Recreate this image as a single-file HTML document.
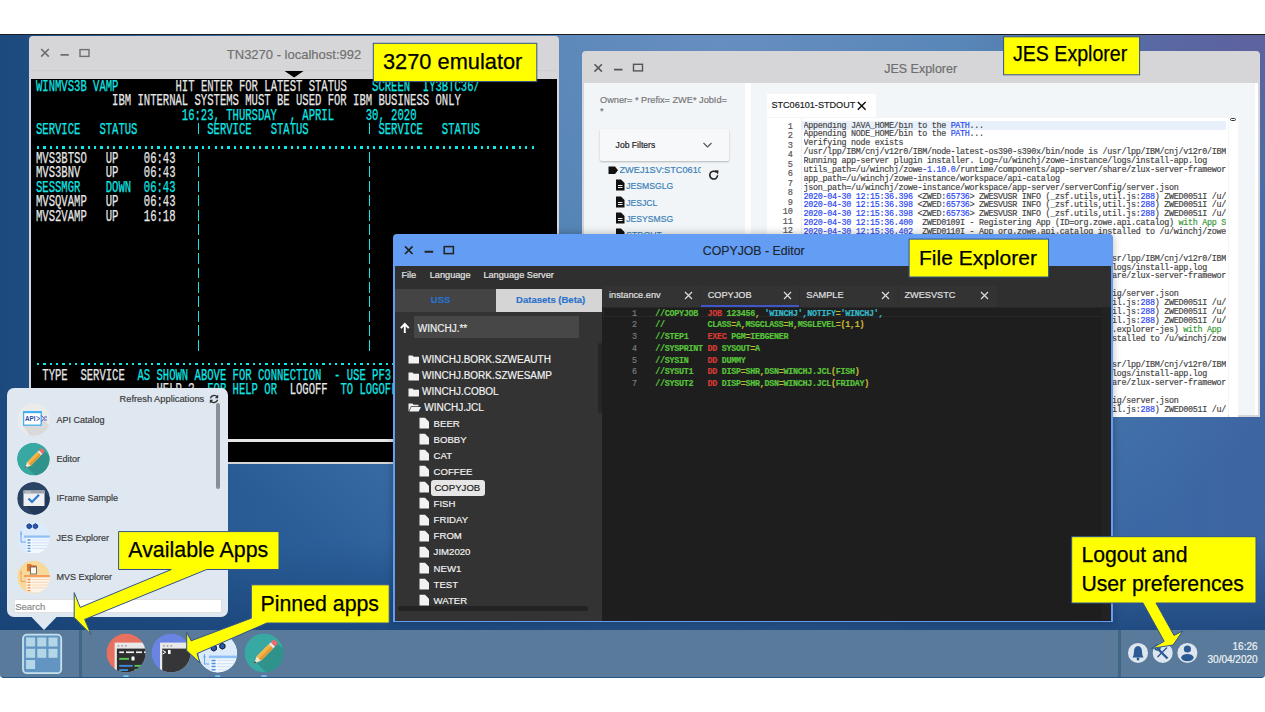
<!DOCTYPE html>
<html><head><meta charset="utf-8">
<style>
*{margin:0;padding:0;box-sizing:border-box}
html,body{width:1265px;height:712px;overflow:hidden;background:#fff;font-family:"Liberation Sans",sans-serif}
.a{position:absolute;-webkit-text-stroke:0.18px currentColor}
#desk{position:absolute;left:0;top:34px;width:1265px;height:596px;border-top:1.5px solid #1e1e22;
background:radial-gradient(ellipse 300px 160px at 1265px 0px,rgba(94,98,158,1) 0%,rgba(94,98,158,.6) 50%,rgba(94,98,158,0) 100%),radial-gradient(ellipse 700px 620px at 720px 0px,rgba(104,142,192,1) 0%,rgba(92,140,186,.8) 40%,rgba(92,140,186,0) 100%),linear-gradient(0deg,rgba(24,66,118,.75) 0px,rgba(24,66,118,0) 90px),linear-gradient(90deg,#1d4a7e 0px,#1e4b80 40px,#295c95 240px,#3064a0 500px,#3a6aa6 900px,#3b68a4 1150px,#3e64a2 1265px)}
#taskbar{position:absolute;left:0;top:630px;width:1265px;height:47.5px;background:#597a9a;border-bottom:1.5px solid #1f5585;border-radius:0 0 4px 4px}
.win{position:absolute;border-radius:4px 4px 0 0;overflow:hidden}
.x{position:absolute;width:10px;height:10px}
.term{position:absolute;left:36.3px;top:79.6px;font-family:"Liberation Mono",monospace;font-size:16.5px;line-height:14.45px;white-space:pre;transform:scaleX(0.6404);transform-origin:0 0;color:#ededed;-webkit-text-stroke:0.25px currentColor}
.cl{-webkit-text-stroke:0.25px #000}
.yl{position:absolute;background:#ff0;border:1px solid #2f4f8f;font-family:"Liberation Sans",sans-serif;color:#000;white-space:nowrap}
</style></head><body>
<div id="desk"></div>
<div id="taskbar"></div>

<!-- TN3270 window -->
<div class="win" id="tn" style="left:29px;top:36px;width:530px;height:428px;background:#d6d6d8">
  <svg class="a" style="left:0;top:0" width="530" height="42">
    <path d="M12.2 13 L19.8 20.6 M19.8 13 L12.2 20.6" stroke="#6e6e6e" stroke-width="1.6"/>
    <path d="M31.5 18.8 H39.8" stroke="#6e6e6e" stroke-width="1.8"/>
    <rect x="51" y="13.6" width="9" height="6.8" fill="none" stroke="#6e6e6e" stroke-width="1.4"/>
    <line x1="2" y1="34.6" x2="528" y2="34.6" stroke="#cfcfd1" stroke-width="1"/>
    <path d="M255.6 35 L274.6 35 L265.1 41.5 Z" fill="#000"/>
  </svg>
  <div class="a" style="left:197.8px;top:10.8px;font-size:13px;line-height:16px;color:#707070">TN3270 - localhost:992</div>
  <div class="a" style="left:2px;top:42.5px;width:526px;height:383.5px;background:#000"></div>
  <div class="a" style="left:2px;top:403px;width:526px;height:2.6px;background:#e6e6e6"></div>
</div>
<div class="term"><span style="color:#10e8e8">WINMVS3B VAMP</span>         <span style="color:#e8e8e8">HIT ENTER FOR LATEST STATUS</span>    <span style="color:#10e8e8">SCREEN  IY3BTC36/</span>
            <span style="color:#e8e8e8">IBM INTERNAL SYSTEMS MUST BE USED FOR IBM BUSINESS ONLY</span>
                       <span style="color:#10e8e8">16:23, THURSDAY  , APRIL     30, 2020</span>
<span style="color:#10e8e8">SERVICE   STATUS</span>           <span style="color:#10e8e8">SERVICE   STATUS</span>           <span style="color:#10e8e8">SERVICE   STATUS</span>
                                                                               
<span style="color:#e8e8e8">MVS3BTSO</span>   <span style="color:#e8e8e8">UP</span>    <span style="color:#e8e8e8">06:43</span>                               
<span style="color:#e8e8e8">MVS3BNV</span>    <span style="color:#e8e8e8">UP</span>    <span style="color:#e8e8e8">06:43</span>                               
<span style="color:#10e8e8">SESSMGR</span>    <span style="color:#10e8e8">DOWN</span>  <span style="color:#10e8e8">06:43</span>                               
<span style="color:#e8e8e8">MVSQVAMP</span>   <span style="color:#e8e8e8">UP</span>    <span style="color:#e8e8e8">06:43</span>                               
<span style="color:#e8e8e8">MVS2VAMP</span>   <span style="color:#e8e8e8">UP</span>    <span style="color:#e8e8e8">16:18</span>                               
                                                     
                                                     
                                                     
                                                     
                                                     
                                                     
                                                     
                                                     
                                                     
                                                                               
 <span style="color:#e8e8e8">TYPE</span>  <span style="color:#e8e8e8">SERVICE</span>  <span style="color:#10e8e8">AS SHOWN ABOVE FOR CONNECTION  - USE PF3 TO EXIT</span>
                   <span style="color:#e8e8e8">HELP ?</span>  <span style="color:#10e8e8">FOR HELP OR</span>  <span style="color:#e8e8e8">LOGOFF</span>  <span style="color:#10e8e8">TO LOGOFF</span>


</div>
<div class="a" style="left:37.2px;top:146.3px;width:500px;height:2.3px;background:repeating-linear-gradient(90deg,#10e8e8 0 2.3px,transparent 2.3px 6.34px)"></div>
<div class="a" style="left:37.2px;top:362.5px;width:500px;height:2.3px;background:repeating-linear-gradient(90deg,#10e8e8 0 2.3px,transparent 2.3px 6.34px)"></div>
<div class="a" style="left:197.9px;top:122.8px;width:1.4px;height:10.8px;background:#10e8e8"></div>
<div class="a" style="left:197.9px;top:151.8px;width:1.4px;height:202.3px;background:repeating-linear-gradient(180deg,#10e8e8 0 10.8px,transparent 10.8px 14.45px)"></div>
<div class="a" style="left:369.1px;top:122.8px;width:1.4px;height:10.8px;background:#10e8e8"></div>
<div class="a" style="left:369.1px;top:151.8px;width:1.4px;height:202.3px;background:repeating-linear-gradient(180deg,#10e8e8 0 10.8px,transparent 10.8px 14.45px)"></div>

<!-- JES window -->
<div class="win" id="jes" style="left:582px;top:51px;width:678px;height:365.5px;background:#d6d6d8">
  <svg class="a" style="left:0;top:0" width="80" height="32">
    <path d="M12.5 13.2 L19.9 20.6 M19.9 13.2 L12.5 20.6" stroke="#555" stroke-width="1.5"/>
    <path d="M32 18.6 H40.5" stroke="#555" stroke-width="1.8"/>
    <rect x="51.5" y="13.3" width="9" height="6.6" fill="none" stroke="#555" stroke-width="1.4"/>
  </svg>
  <div class="a" style="left:302.2px;top:10.2px;font-size:12.5px;line-height:16px;color:#6e6e6e">JES Explorer</div>
  <div class="a" style="left:2px;top:31.5px;width:160.5px;height:332px;background:#f2f5f7"></div>
  <div class="a" style="left:162.5px;top:31.5px;width:6px;height:332px;background:#fff"></div>
  <div class="a" style="left:168.5px;top:31.5px;width:504px;height:332px;background:#f3f6f8"></div>
  <div class="a" style="left:672.5px;top:31.5px;width:3.5px;height:332px;background:#fff"></div>
  <!-- left panel -->
  <div class="a" style="left:18px;top:43.5px;width:135px;font-size:9.2px;line-height:11px;color:#777">Owner= * Prefix= ZWE* JobId=<br>*</div>
  <div class="a" style="left:18px;top:78.3px;width:128.8px;height:31.5px;background:#f6f8fa;box-shadow:0 1px 2px rgba(0,0,0,.25);border-radius:2px"></div>
  <div class="a" style="left:33.6px;top:87.6px;font-size:8.6px;line-height:12px;color:#222">Job Filters</div>
  <svg class="a" style="left:120px;top:89px" width="12" height="10"><path d="M1.5 3 L5.5 7 L9.5 3" fill="none" stroke="#555" stroke-width="1.2"/></svg>
  <svg class="a" style="left:26px;top:113.5px" width="11" height="11"><path d="M0.5 1.5 H7 L10 5.2 L7 8.9 H0.5 Z" fill="#111"/></svg>
  <div class="a" style="left:37.5px;top:112.5px;width:81px;overflow:hidden;font-size:9.2px;line-height:13px;color:#3a80b8;white-space:nowrap">ZWEJ1SV:STC06101</div>
  <svg class="a" style="left:126px;top:118px" width="12" height="12"><path d="M9.6 6.3 A3.9 3.9 0 1 1 8.3 3.2" fill="none" stroke="#222" stroke-width="1.6"/><path d="M6.5 1.2 L10.6 1.6 L10 5.5 Z" fill="#222"/></svg>
  <div class="a" style="left:33px;top:130px;font-size:10px;line-height:13px;color:#3a80b8">
    <div style="position:absolute;left:0;top:0">&nbsp;</div>
  </div>
  <svg class="a" style="left:33px;top:128.3px" width="10" height="12"><path d="M1 0.5 H6 L9.5 4 V11.5 H1 Z" fill="#111"/><path d="M3 6.5 H7.5 M3 8.5 H7.5" stroke="#f2f5f7" stroke-width="1"/></svg>
  <div class="a" style="left:44.3px;top:129.4px;font-size:8.6px;line-height:13px;color:#3a80b8">JESMSGLG</div>
  <svg class="a" style="left:33px;top:144.8px" width="10" height="12"><path d="M1 0.5 H6 L9.5 4 V11.5 H1 Z" fill="#111"/><path d="M3 6.5 H7.5 M3 8.5 H7.5" stroke="#f2f5f7" stroke-width="1"/></svg>
  <div class="a" style="left:44.3px;top:145.9px;font-size:8.6px;line-height:13px;color:#3a80b8">JESJCL</div>
  <svg class="a" style="left:33px;top:160.9px" width="10" height="12"><path d="M1 0.5 H6 L9.5 4 V11.5 H1 Z" fill="#111"/><path d="M3 6.5 H7.5 M3 8.5 H7.5" stroke="#f2f5f7" stroke-width="1"/></svg>
  <div class="a" style="left:44.3px;top:162.0px;font-size:8.6px;line-height:13px;color:#3a80b8">JESYSMSG</div>
  <svg class="a" style="left:33px;top:177.2px" width="10" height="12"><path d="M1 0.5 H6 L9.5 4 V11.5 H1 Z" fill="#111"/><path d="M3 6.5 H7.5 M3 8.5 H7.5" stroke="#f2f5f7" stroke-width="1"/></svg>
  <div class="a" style="left:44.3px;top:178.3px;font-size:8.6px;line-height:13px;color:#3a80b8">STDOUT</div>
  <!-- right panel -->
  <div class="a" style="left:185px;top:42.7px;width:108.5px;height:23.5px;background:#fff"></div>
  <div class="a" style="left:189.4px;top:48px;font-size:9.1px;line-height:12px;color:#1a1a1a">STC06101-STDOUT</div>
  <svg class="a" style="left:274px;top:49px" width="12" height="12"><path d="M1.8 2 L9.6 9.8 M9.6 2 L1.8 9.8" stroke="#111" stroke-width="1.5"/></svg>
  <div class="a" style="left:185px;top:66.5px;width:460.5px;height:300px;background:#fff"></div>
  <div class="a" style="left:218.6px;top:66.5px;width:1.2px;height:300px;background:#f0f0f0"></div>
  <div class="a" style="left:220px;top:70.1px;width:424.2px;height:8.6px;background:#e8f0fb"></div>
  <div class="a" style="left:646.9px;top:66.9px;width:9.3px;height:300px;background:#fff"></div>
  <div class="a" style="left:648px;top:66.9px;width:6.2px;height:3.6px;border:1.3px solid #333;border-radius:2px;background:#fff"></div>
  <div class="a" style="left:186px;top:71.9px;width:25px;text-align:right;font-family:'Liberation Mono',monospace;font-size:8.6px;line-height:9.5px;color:#555;white-space:pre">1
2
3
4
5
6
7
8
9
10
11
12
13</div>
  <div class="a" style="left:221.5px;top:70.5px;width:422.4px;overflow:hidden;height:296px;font-family:'Liberation Mono',monospace;font-size:8.4px;letter-spacing:-0.28px;line-height:8.88px;color:#454545;white-space:pre">Appending JAVA_HOME/bin to the <span style="color:#2a48f2">PATH</span>...
Appending NODE_HOME/bin to the <span style="color:#2a48f2">PATH</span>...
Verifying node exists
/usr/lpp/IBM/cnj/v12r0/IBM/node-latest-os390-s390x/bin/node is /usr/lpp/IBM/cnj/v12r0/IBM/node
Running app-server plugin installer. Log=/u/winchj/zowe-instance/logs/install-app.log
utils_path=/u/winchj/zowe<span style="color:#2a48f2">-1.10.0</span>/runtime/components/app-server/share/zlux-server-framework
app_path=/u/winchj/zowe-instance/workspace/api-catalog
json_path=/u/winchj/zowe-instance/workspace/app-server/serverConfig/server.json
<span style="color:#2a48f2">2020-04-30 12:15:36.396</span> &lt;ZWED:<span style="color:#2a48f2">65736</span>&gt; ZWESVUSR INFO (_zsf.utils,util.js:<span style="color:#2a48f2">288</span>) ZWED0051I /u/winchj/zowe-instance
<span style="color:#2a48f2">2020-04-30 12:15:36.398</span> &lt;ZWED:<span style="color:#2a48f2">65736</span>&gt; ZWESVUSR INFO (_zsf.utils,util.js:<span style="color:#2a48f2">288</span>) ZWED0051I /u/winchj/zowe-instance
<span style="color:#2a48f2">2020-04-30 12:15:36.398</span> &lt;ZWED:<span style="color:#2a48f2">65736</span>&gt; ZWESVUSR INFO (_zsf.utils,util.js:<span style="color:#2a48f2">288</span>) ZWED0051I /u/winchj/zowe-instance
<span style="color:#2a48f2">2020-04-30 12:15:36.400</span>  ZWED0109I - Registering App (ID=org.zowe.api.catalog) <span style="color:#3a9a3a">with App Server</span>
<span style="color:#2a48f2">2020-04-30 12:15:36.402</span>  ZWED0110I - App org.zowe.api.catalog installed to /u/winchj/zowe-instance
Appending NODE_HOME/bin to the <span style="color:#2a48f2">PATH</span>...
Verifying node exists
/usr/lpp/IBM/cnj/v12r0/IBM/node-latest-os390-s390x/bin/node is /usr/lpp/IBM/cnj/v12r0/IBM/node
Running app-server plugin installer. Log=/u/winchj/zowe-instance/logs/install-app.log
utils_path=/u/winchj/zowe<span style="color:#2a48f2">-1.10.0</span>/runtime/components/app-server/share/zlux-server-framework
app_path=/u/winchj/zowe-instance/workspace/api-catalog
json_path=/u/winchj/zowe-instance/workspace/app-server/serverConfig/server.json
<span style="color:#2a48f2">2020-04-30 12:15:36.396</span> &lt;ZWED:<span style="color:#2a48f2">65736</span>&gt; ZWESVUSR INFO (_zsf.utils,util.js:<span style="color:#2a48f2">288</span>) ZWED0051I /u/winchj/zowe-instance
<span style="color:#2a48f2">2020-04-30 12:15:36.398</span> &lt;ZWED:<span style="color:#2a48f2">65736</span>&gt; ZWESVUSR INFO (_zsf.utils,util.js:<span style="color:#2a48f2">288</span>) ZWED0051I /u/winchj/zowe-instance
<span style="color:#2a48f2">2020-04-30 12:15:36.398</span> &lt;ZWED:<span style="color:#2a48f2">65736</span>&gt; ZWESVUSR INFO (_zsf.utils,util.js:<span style="color:#2a48f2">288</span>) ZWED0051I /u/winchj/zowe-instance
<span style="color:#2a48f2">2020-04-30 12:15:36.500</span>  ZWED0109I - Registering App (ID=org.zowe.explorer-jes) <span style="color:#3a9a3a">with App</span> Server
<span style="color:#2a48f2">2020-04-30 12:15:36.502</span>  ZWED0110I - App org.zowe.explorer-jes installed to /u/winchj/zowe-instance
Appending NODE_HOME/bin to the <span style="color:#2a48f2">PATH</span>...
Verifying node exists
/usr/lpp/IBM/cnj/v12r0/IBM/node-latest-os390-s390x/bin/node is /usr/lpp/IBM/cnj/v12r0/IBM/node
Running app-server plugin installer. Log=/u/winchj/zowe-instance/logs/install-app.log
utils_path=/u/winchj/zowe<span style="color:#2a48f2">-1.10.0</span>/runtime/components/app-server/share/zlux-server-framework
app_path=/u/winchj/zowe-instance/workspace/api-catalog
json_path=/u/winchj/zowe-instance/workspace/app-server/serverConfig/server.json
<span style="color:#2a48f2">2020-04-30 12:15:36.396</span> &lt;ZWED:<span style="color:#2a48f2">65736</span>&gt; ZWESVUSR INFO (_zsf.utils,util.js:<span style="color:#2a48f2">288</span>) ZWED0051I /u/winchj/zowe-instance</div>
</div>

<!-- Editor window -->
<div class="win" id="ed" style="left:393px;top:234px;width:720px;height:388px;background:#649ef4;border-radius:4px 4px 0 0;box-shadow:0 0 8px rgba(0,0,0,.28)">
  <svg class="a" style="left:0;top:0" width="80" height="32">
    <path d="M12 12.4 L19.6 20 M19.6 12.4 L12 20" stroke="#222" stroke-width="1.7"/>
    <path d="M31.6 17.8 H40.2" stroke="#222" stroke-width="1.9"/>
    <rect x="51.2" y="12.6" width="9.2" height="7" fill="none" stroke="#222" stroke-width="1.5"/>
  </svg>
  <div class="a" style="left:309.8px;top:8.8px;font-size:12.3px;line-height:16px;color:#1c2633">COPYJOB - Editor</div>
  <div class="a" style="left:2px;top:31.5px;width:716px;height:355px;background:#2f2f2f"></div>
  <div class="a" style="left:8.4px;top:35.3px;font-size:9.2px;line-height:12px;color:#e6e6e6;white-space:nowrap">File</div>
  <div class="a" style="left:36.7px;top:35.3px;font-size:9.2px;line-height:12px;color:#e6e6e6;white-space:nowrap">Language</div>
  <div class="a" style="left:90.4px;top:35.3px;font-size:9.2px;line-height:12px;color:#e6e6e6;white-space:nowrap">Language Server</div>
  <!-- left panel -->
  <div class="a" style="left:2.2px;top:54.7px;width:206.6px;height:332px;background:#333"></div>
  <div class="a" style="left:2.2px;top:54.7px;width:100.5px;height:23.5px;background:#444"></div>
  <div class="a" style="left:102.7px;top:54.7px;width:106px;height:23.5px;background:#d5d5d5"></div>
  <div class="a" style="left:-2.7px;top:58.5px;width:100.5px;text-align:center;font-size:9.5px;line-height:14px;font-weight:bold;color:#2a72cc">USS</div>
  <div class="a" style="left:104.7px;top:58.5px;width:106px;text-align:center;font-size:9.5px;line-height:14px;font-weight:bold;color:#2a72cc">Datasets (Beta)</div>
  <div class="a" style="left:21.3px;top:82px;width:164.7px;height:21.8px;background:#474747"></div>
  <svg class="a" style="left:6px;top:88px" width="12" height="12"><path d="M5.8 11 V2.5 M1.8 6.2 L5.8 2 L9.8 6.2" fill="none" stroke="#fff" stroke-width="1.9"/></svg>
  <div class="a" style="left:24.8px;top:87.5px;font-size:10px;line-height:13px;color:#f0f0f0">WINCHJ.**</div>
  <div class="a" style="left:204.5px;top:109px;width:4px;height:70px;background:#262626;border-radius:2px"></div>
  <div class="a" style="left:5px;top:371.5px;width:190px;height:5px;background:#232323;border-radius:3px"></div>
  <svg class="a" style="left:15px;top:119.2px" width="12" height="12"><path d="M0.5 2.5 H4.5 L5.7 3.8 H11 V10.5 H0.5 Z" fill="#f2f2f2"/></svg>
  <div class="a" style="left:29px;top:118.7px;font-size:10px;line-height:13px;color:#f2f2f2;white-space:nowrap">WINCHJ.BORK.SZWEAUTH</div>
  <svg class="a" style="left:15px;top:135.6px" width="12" height="12"><path d="M0.5 2.5 H4.5 L5.7 3.8 H11 V10.5 H0.5 Z" fill="#f2f2f2"/></svg>
  <div class="a" style="left:29px;top:135.1px;font-size:10px;line-height:13px;color:#f2f2f2;white-space:nowrap">WINCHJ.BORK.SZWESAMP</div>
  <svg class="a" style="left:15px;top:151.5px" width="12" height="12"><path d="M0.5 2.5 H4.5 L5.7 3.8 H11 V10.5 H0.5 Z" fill="#f2f2f2"/></svg>
  <div class="a" style="left:29px;top:151.0px;font-size:10px;line-height:13px;color:#f2f2f2;white-space:nowrap">WINCHJ.COBOL</div>
  <svg class="a" style="left:14.5px;top:167.1px" width="14" height="12"><path d="M0.5 2.5 H4.5 L5.7 3.8 H10.5 V5.2 H3 L0.5 10.5 Z M3.4 6 H13 L10.6 10.5 H1.2 Z" fill="#f2f2f2"/></svg>
  <div class="a" style="left:31.3px;top:166.6px;font-size:10px;line-height:13px;color:#f2f2f2;white-space:nowrap">WINCHJ.JCL</div>
  <svg class="a" style="left:26px;top:183.1px" width="11" height="12"><path d="M0.5 0.8 H6 L10 4.8 V11.5 H0.5 Z" fill="#f2f2f2"/></svg>
  <div class="a" style="left:40.6px;top:182.8px;font-size:9.6px;line-height:13px;color:#f2f2f2">BEER</div>
  <svg class="a" style="left:26px;top:199.0px" width="11" height="12"><path d="M0.5 0.8 H6 L10 4.8 V11.5 H0.5 Z" fill="#f2f2f2"/></svg>
  <div class="a" style="left:40.6px;top:198.7px;font-size:9.6px;line-height:13px;color:#f2f2f2">BOBBY</div>
  <svg class="a" style="left:26px;top:215.1px" width="11" height="12"><path d="M0.5 0.8 H6 L10 4.8 V11.5 H0.5 Z" fill="#f2f2f2"/></svg>
  <div class="a" style="left:40.6px;top:214.8px;font-size:9.6px;line-height:13px;color:#f2f2f2">CAT</div>
  <svg class="a" style="left:26px;top:231.2px" width="11" height="12"><path d="M0.5 0.8 H6 L10 4.8 V11.5 H0.5 Z" fill="#f2f2f2"/></svg>
  <div class="a" style="left:40.6px;top:230.9px;font-size:9.6px;line-height:13px;color:#f2f2f2">COFFEE</div>
  <svg class="a" style="left:26px;top:247.3px" width="11" height="12"><path d="M0.5 0.8 H6 L10 4.8 V11.5 H0.5 Z" fill="#f2f2f2"/></svg>
  <div class="a" style="left:38.3px;top:246.4px;width:54px;height:15.3px;background:#e6e6e6;border-radius:3px"></div>
  <div class="a" style="left:41.4px;top:247.2px;font-size:9.6px;line-height:13px;color:#222">COPYJOB</div>
  <svg class="a" style="left:26px;top:263.4px" width="11" height="12"><path d="M0.5 0.8 H6 L10 4.8 V11.5 H0.5 Z" fill="#f2f2f2"/></svg>
  <div class="a" style="left:40.6px;top:263.1px;font-size:9.6px;line-height:13px;color:#f2f2f2">FISH</div>
  <svg class="a" style="left:26px;top:279.5px" width="11" height="12"><path d="M0.5 0.8 H6 L10 4.8 V11.5 H0.5 Z" fill="#f2f2f2"/></svg>
  <div class="a" style="left:40.6px;top:279.2px;font-size:9.6px;line-height:13px;color:#f2f2f2">FRIDAY</div>
  <svg class="a" style="left:26px;top:295.6px" width="11" height="12"><path d="M0.5 0.8 H6 L10 4.8 V11.5 H0.5 Z" fill="#f2f2f2"/></svg>
  <div class="a" style="left:40.6px;top:295.3px;font-size:9.6px;line-height:13px;color:#f2f2f2">FROM</div>
  <svg class="a" style="left:26px;top:311.7px" width="11" height="12"><path d="M0.5 0.8 H6 L10 4.8 V11.5 H0.5 Z" fill="#f2f2f2"/></svg>
  <div class="a" style="left:40.6px;top:311.4px;font-size:9.6px;line-height:13px;color:#f2f2f2">JIM2020</div>
  <svg class="a" style="left:26px;top:327.8px" width="11" height="12"><path d="M0.5 0.8 H6 L10 4.8 V11.5 H0.5 Z" fill="#f2f2f2"/></svg>
  <div class="a" style="left:40.6px;top:327.5px;font-size:9.6px;line-height:13px;color:#f2f2f2">NEW1</div>
  <svg class="a" style="left:26px;top:343.9px" width="11" height="12"><path d="M0.5 0.8 H6 L10 4.8 V11.5 H0.5 Z" fill="#f2f2f2"/></svg>
  <div class="a" style="left:40.6px;top:343.6px;font-size:9.6px;line-height:13px;color:#f2f2f2">TEST</div>
  <svg class="a" style="left:26px;top:360.0px" width="11" height="12"><path d="M0.5 0.8 H6 L10 4.8 V11.5 H0.5 Z" fill="#f2f2f2"/></svg>
  <div class="a" style="left:40.6px;top:359.7px;font-size:9.6px;line-height:13px;color:#f2f2f2">WATER</div>
  <!-- code area -->
  <div class="a" style="left:208.8px;top:73px;width:509.2px;height:313.6px;background:#1e1e1e"></div>
  <div class="a" style="left:208.8px;top:52px;width:98.7px;height:21px;background:#333"></div>
  <div class="a" style="left:307.9px;top:52px;width:98.4px;height:21px;background:#333"></div>
  <div class="a" style="left:406.7px;top:52px;width:98.4px;height:21px;background:#333"></div>
  <div class="a" style="left:505.5px;top:52px;width:98.4px;height:21px;background:#333"></div>
  <div class="a" style="left:307.9px;top:70.7px;width:98.4px;height:2.2px;background:#3f55c8"></div>
  <div class="a" style="left:216.0px;top:55.3px;font-size:9.2px;line-height:12px;color:#e0e0e0;white-space:nowrap">instance.env</div>
  <svg class="a" style="left:290.9px;top:57.3px" width="9" height="9"><path d="M1 1 L8 8 M8 1 L1 8" stroke="#ddd" stroke-width="1.2"/></svg>
  <div class="a" style="left:314.7px;top:55.3px;font-size:9.2px;line-height:12px;color:#e0e0e0;white-space:nowrap">COPYJOB</div>
  <svg class="a" style="left:389.5px;top:57.3px" width="9" height="9"><path d="M1 1 L8 8 M8 1 L1 8" stroke="#ddd" stroke-width="1.2"/></svg>
  <div class="a" style="left:413.3px;top:55.3px;font-size:9.2px;line-height:12px;color:#e0e0e0;white-space:nowrap">SAMPLE</div>
  <svg class="a" style="left:488.2px;top:57.3px" width="9" height="9"><path d="M1 1 L8 8 M8 1 L1 8" stroke="#ddd" stroke-width="1.2"/></svg>
  <div class="a" style="left:511.4px;top:55.3px;font-size:9.2px;line-height:12px;color:#e0e0e0;white-space:nowrap">ZWESVSTC</div>
  <svg class="a" style="left:586.8px;top:57.3px" width="9" height="9"><path d="M1 1 L8 8 M8 1 L1 8" stroke="#ddd" stroke-width="1.2"/></svg>
  <div class="a" style="left:210px;top:73.2px;width:500px;height:10.2px;border:1px solid #282828"></div>
  <div class="a" style="left:709px;top:73px;width:9px;height:313px;background:#222"></div>
  <div class="a" style="left:220px;top:74.7px;width:24px;text-align:right;font-family:'Liberation Mono',monospace;font-size:8.4px;line-height:11.72px;color:#7a7a7a;white-space:pre">1
2
3
4
5
6
7</div>
  <div class="a" style="left:262.3px;top:74.7px;font-family:'Liberation Mono',monospace;font-size:8.4px;letter-spacing:-0.28px;line-height:11.72px;white-space:pre;font-weight:bold"><span style="color:#58c43a">//COPYJOB</span>  <span style="color:#d83a34">JOB</span> <span style="color:#58c43a">123456</span><span style="color:#c8b534">,</span> <span style="color:#35b8c8">'WINCHJ'</span><span style="color:#35b8c8">,NOTIFY</span><span style="color:#c8b534">=</span><span style="color:#35b8c8">'WINCHJ',</span>
<span style="color:#58c43a">//</span>         <span style="color:#58c43a">CLASS</span><span style="color:#c8b534">=</span><span style="color:#58c43a">A</span><span style="color:#c8b534">,</span><span style="color:#58c43a">MSGCLASS</span><span style="color:#c8b534">=</span><span style="color:#58c43a">H</span><span style="color:#c8b534">,</span><span style="color:#58c43a">MSGLEVEL</span><span style="color:#c8b534">=</span><span style="color:#c8b534">(1,1)</span>
<span style="color:#58c43a">//STEP1</span>    <span style="color:#d83a34">EXEC</span> <span style="color:#58c43a">PGM</span><span style="color:#c8b534">=</span><span style="color:#58c43a">IEBGENER</span>
<span style="color:#58c43a">//SYSPRINT</span> <span style="color:#d83a34">DD</span> <span style="color:#58c43a">SYSOUT</span><span style="color:#c8b534">=</span><span style="color:#58c43a">A</span>
<span style="color:#58c43a">//SYSIN</span>    <span style="color:#d83a34">DD</span> <span style="color:#58c43a">DUMMY</span>
<span style="color:#58c43a">//SYSUT1</span>   <span style="color:#d83a34">DD</span> <span style="color:#58c43a">DISP</span><span style="color:#c8b534">=</span><span style="color:#58c43a">SHR</span><span style="color:#c8b534">,</span><span style="color:#58c43a">DSN</span><span style="color:#c8b534">=</span><span style="color:#58c43a">WINCHJ.JCL</span><span style="color:#c8b534">(</span><span style="color:#58c43a">FISH</span><span style="color:#c8b534">)</span>
<span style="color:#58c43a">//SYSUT2</span>   <span style="color:#d83a34">DD</span> <span style="color:#58c43a">DISP</span><span style="color:#c8b534">=</span><span style="color:#58c43a">SHR</span><span style="color:#c8b534">,</span><span style="color:#58c43a">DSN</span><span style="color:#c8b534">=</span><span style="color:#58c43a">WINCHJ.JCL</span><span style="color:#c8b534">(</span><span style="color:#58c43a">FRIDAY</span><span style="color:#c8b534">)</span></div>
</div>

<!-- App menu -->
<div class="a" style="left:7px;top:387.5px;width:221px;height:229.5px;background:#dfe7f0;border-radius:7px"></div>
<svg class="a" style="left:0;top:600px" width="90" height="32"><path d="M31 16.5 L57 16.5 L44 30 Z" fill="#dfe7f0"/></svg>
<div class="a" style="left:119.5px;top:392.8px;font-size:9.3px;line-height:12px;color:#3a3a3a;white-space:nowrap">Refresh Applications</div>
<svg class="a" style="left:208px;top:392.5px" width="12" height="12"><path d="M9.3 4.2 A3.8 3.8 0 0 0 2.4 5.2 M2.7 7.8 A3.8 3.8 0 0 0 9.6 6.8" fill="none" stroke="#333" stroke-width="1.4"/><path d="M10.2 1.6 V5.2 H6.8 Z M1.8 10.4 V6.8 H5.2 Z" fill="#333"/></svg>
<div class="a" style="left:216.2px;top:403px;width:3.8px;height:86px;background:#8a8f95;border-radius:2px"></div>
<div class="a" style="left:56.4px;top:413.5px;font-size:9px;line-height:12px;color:#3a3a3a">API Catalog</div>
<div class="a" style="left:56.4px;top:453px;font-size:9px;line-height:12px;color:#3a3a3a">Editor</div>
<div class="a" style="left:56.4px;top:492.4px;font-size:9px;line-height:12px;color:#3a3a3a">IFrame Sample</div>
<div class="a" style="left:56.4px;top:531.7px;font-size:9px;line-height:12px;color:#3a3a3a">JES Explorer</div>
<div class="a" style="left:56.4px;top:570.9px;font-size:9px;line-height:12px;color:#3a3a3a">MVS Explorer</div>
<div class="a" style="left:13.6px;top:599.3px;width:208.6px;height:14.2px;background:#fff;border:1px solid #e0e0e0"></div>
<div class="a" style="left:15.2px;top:600.5px;font-size:9.5px;line-height:12px;color:#8a8a8a">Search</div>
<svg class="a" style="left:0;top:380px" width="70" height="220">
  <defs>
    <clipPath id="m1"><circle cx="33.7" cy="39.4" r="16.3"/></clipPath>
    <clipPath id="m2"><circle cx="33.3" cy="79.1" r="16.3"/></clipPath>
    <clipPath id="m3"><circle cx="33.5" cy="118.4" r="16.3"/></clipPath>
    <clipPath id="m4"><circle cx="33.5" cy="157.7" r="16.3"/></clipPath>
    <clipPath id="m5"><circle cx="33.5" cy="196.9" r="16.3"/></clipPath>
  </defs>
  <g clip-path="url(#m1)">
    <circle cx="33.7" cy="39.4" r="16.3" fill="#ebebeb"/>
    <path d="M23 45.8 L41.8 45.8 L41.8 38 L62 58 L40 70 Z" fill="#d9d9d9"/>
    <rect x="23.6" y="31.8" width="17.6" height="13.4" fill="#fff" stroke="#41aff0" stroke-width="1.3"/>
    <rect x="23" y="31.2" width="18.8" height="2" fill="#41aff0"/>
    <text x="25" y="41.3" font-family="Liberation Sans" font-weight="bold" font-size="6.3" fill="#2f46a8">API</text>
    <path d="M36.5 36.5 L40 38.5 L36.5 40.5 M41 35.5 L44.5 38.5 L41 41.5 M44 37 h3 M44 40 h3" stroke="#4b5ec2" stroke-width="1" fill="none"/>
  </g>
  <g clip-path="url(#m2)">
    <circle cx="33.3" cy="79.1" r="16.3" fill="#38a9a2"/>
    <g transform="translate(34.0 78.9) rotate(-45) scale(0.836)">
      <rect x="-13" y="0" width="28.5" height="40" fill="#2f928b"/>
      <path d="M-15.5 0 L-8.5 -3 H9 V3 H-8.5 Z" fill="#f3e6c8"/>
      <path d="M-15.5 0 L-13 -1.1 V1.1 Z" fill="#3a3a3a"/>
      <rect x="-8.5" y="-3" width="17.5" height="3" fill="#f7b441"/>
      <rect x="-8.5" y="0" width="17.5" height="3" fill="#e49a2f"/>
      <rect x="9" y="-3" width="2.6" height="6" fill="#e6e6e6"/>
      <path d="M11.6 -3 H14.5 Q15.8 -3 15.8 -1.5 V1.5 Q15.8 3 14.5 3 H11.6 Z" fill="#f06868"/>
    </g>
  </g>
  <g clip-path="url(#m3)">
    <circle cx="33.5" cy="118.4" r="16.3" fill="#2b4466"/>
    <path d="M25 124 L45 124 L45 112 L62 130 L45 150 Z" fill="#22395a"/>
    <rect x="23.5" y="110.5" width="21" height="15.5" fill="#eef0f2"/>
    <rect x="23.5" y="110.5" width="21" height="3" fill="#9aa3ad"/>
    <path d="M25.5 112 h1 M27.5 112 h1 M29.5 112 h1" stroke="#fff" stroke-width="1"/>
    <path d="M28.5 118.5 L32 122 L39 114.8" fill="none" stroke="#2a7ad8" stroke-width="2.2"/>
  </g>
  <g clip-path="url(#m4)">
    <circle cx="33.5" cy="157.7" r="16.3" fill="#dcebfb"/>
    <path d="M27 145 l2.2 -1.2 l2.2 1.2 v2.5 l-2.2 1.2 l-2.2 -1.2 Z M33.2 145 l2.2 -1.2 l2.2 1.2 v2.5 l-2.2 1.2 l-2.2 -1.2 Z" fill="#2a58b0" stroke="#1c3d88" stroke-width="1"/>
    <rect x="24" y="155.5" width="28" height="2.2" fill="#8ec0f5"/>
    <rect x="26.5" y="158" width="25" height="15" fill="#f3f8ff"/>
    <path d="M27.5 160 h3 M27.5 162.8 h3 M27.5 165.6 h3 M27.5 168.4 h3 M27.5 171.2 h3" stroke="#4a90e0" stroke-width="1.3"/>
    <path d="M32 160 h18 M32 162.8 h18 M32 165.6 h18 M32 168.4 h18" stroke="#cfe2f8" stroke-width="1"/>
    <path d="M21 151 v3 M20 154 h2 M21 154 V162 H26" fill="none" stroke="#6aa8ea" stroke-width="1"/>
  </g>
  <g clip-path="url(#m5)">
    <circle cx="33.5" cy="196.9" r="16.3" fill="#f7d99c"/>
    <path d="M27 184 h4 l1 1.3 h4.5 v6 h-9.5 Z" fill="#e0782c"/>
    <rect x="30.5" y="187" width="6" height="7" fill="#fff8ee" stroke="#555" stroke-width=".8"/>
    <rect x="24" y="195" width="28" height="2.2" fill="#f5a05a"/>
    <rect x="26.5" y="197.5" width="25" height="15" fill="#fdf3e6"/>
    <path d="M27.5 199.5 h3 M27.5 202.3 h3 M27.5 205.1 h3 M27.5 207.9 h3 M27.5 210.7 h3" stroke="#f08a40" stroke-width="1.3"/>
    <path d="M32 199.5 h18 M32 202.3 h18 M32 205.1 h18 M32 207.9 h18" stroke="#f8d8b8" stroke-width="1"/>
    <path d="M21 190.5 v3 M20 193.5 h2 M21 193.5 V201.5 H26" fill="none" stroke="#f5a05a" stroke-width="1"/>
  </g>
</svg>

<!-- taskbar contents -->
<div class="a" style="left:79px;top:630px;width:2.5px;height:47px;background:#3f6884"></div>
<div class="a" style="left:1118px;top:630px;width:2.5px;height:47px;background:#3f6884"></div>
<svg class="a" style="left:0;top:630px" width="1265" height="48">
  <rect x="23" y="4.6" width="38.2" height="38.6" rx="4" fill="#6295c2" stroke="#c6e1ee" stroke-width="1.8"/>
  <g fill="#b4d7e7">
    <rect x="26.1" y="7.5" width="9" height="9"/><rect x="37.3" y="7.5" width="9" height="9"/><rect x="48.5" y="7.5" width="9" height="9"/>
    <rect x="26.1" y="18.8" width="9" height="9"/><rect x="37.3" y="18.8" width="9" height="9"/><rect x="48.5" y="18.8" width="9" height="9"/>
    <rect x="26.1" y="30" width="9" height="9"/>
  </g>
  <defs>
    <clipPath id="c1"><circle cx="126" cy="23" r="19.6"/></clipPath>
    <clipPath id="c2"><circle cx="171" cy="23" r="19.6"/></clipPath>
    <clipPath id="c3"><circle cx="217.7" cy="23" r="19.6"/></clipPath>
    <clipPath id="c4"><circle cx="264" cy="23" r="19.6"/></clipPath>
  </defs>
  <g clip-path="url(#c1)">
    <circle cx="126" cy="23" r="19.6" fill="#e8705f"/>
    <rect x="114.6" y="12.6" width="40" height="40" fill="#e8e8e8"/>
    <rect x="116.9" y="18.6" width="40" height="40" fill="#2e2e30"/>
    <circle cx="118.5" cy="15.8" r="0.9" fill="#999"/><circle cx="122" cy="15.8" r="0.9" fill="#999"/><circle cx="125.8" cy="15.8" r="0.9" fill="#999"/>
    <rect x="119.2" y="21.4" width="4.8" height="1.7" fill="#eee"/><rect x="126" y="21.4" width="8" height="1.7" fill="#eee"/><rect x="136" y="21.4" width="6" height="1.7" fill="#eee"/><rect x="144" y="21.4" width="4" height="1.7" fill="#eee"/>
    <rect x="119.2" y="27.9" width="9.8" height="1.9" fill="#55c85a"/><rect x="131.5" y="26.5" width="3" height="4" rx=".6" fill="#fff"/>
    <rect x="119.2" y="34.9" width="13.5" height="1.9" fill="#3f8ad6"/><rect x="134.5" y="34.9" width="7" height="1.9" fill="#55c85a"/>
    <rect x="119.2" y="39.1" width="8.8" height="1.9" fill="#3f8ad6"/><rect x="134.5" y="39.1" width="5" height="1.9" fill="#55c85a"/>
  </g>
  <g clip-path="url(#c2)">
    <circle cx="171" cy="23" r="19.6" fill="#6a84e4"/>
    <rect x="160" y="12.6" width="40" height="40" fill="#e8e8e8"/>
    <rect x="162.2" y="18.6" width="40" height="40" fill="#363638"/>
    <circle cx="164" cy="15.8" r="0.9" fill="#999"/><circle cx="167.6" cy="15.8" r="0.9" fill="#999"/><circle cx="171.3" cy="15.8" r="0.9" fill="#999"/>
    <path d="M162.6 20.4 L165.8 22.2 L162.6 24" fill="none" stroke="#fff" stroke-width="1"/><rect x="168" y="20" width="2.6" height="4" rx=".5" fill="#fff"/>
  </g>
  <g clip-path="url(#c3)">
    <circle cx="217.7" cy="23" r="19.6" fill="#dcebfb"/>
    <path d="M211.2 16.6 l2.6 -1.5 l2.6 1.5 v3 l-2.6 1.5 l-2.6 -1.5 Z M219.8 14.7 l2.6 -1.5 l2.6 1.5 v3 l-2.6 1.5 l-2.6 -1.5 Z" fill="#2a58b0" stroke="#111" stroke-width="1"/>
    <rect x="208.9" y="25.6" width="35" height="2.6" fill="#8ec0f5"/>
    <rect x="210.5" y="28.5" width="33" height="20" fill="#f2f7fe"/>
    <path d="M211.5 30.4 h4.1 M211.5 33.6 h4.1 M211.5 36.6 h4.1 M211.5 39.7 h4.1 M211.5 42.8 h4.1" stroke="#4a90e0" stroke-width="1.5"/>
    <path d="M217 30.4 h22 M217 33.6 h22 M217 36.6 h22 M217 39.7 h22" stroke="#d2e4f8" stroke-width="1.1"/>
    <path d="M204.5 24 v3 M203.2 27 h2.6 M204.5 27 V34 H209" fill="none" stroke="#6aa8ea" stroke-width="1.1"/>
  </g>
  <g clip-path="url(#c4)">
    <circle cx="264" cy="22.8" r="19.6" fill="#38a9a2"/>
    <g transform="translate(264.8 22.6) rotate(-45) scale(1.0)">
      <rect x="-13" y="0" width="28.5" height="40" fill="#2f928b"/>
      <path d="M-15.5 0 L-8.5 -3 H9 V3 H-8.5 Z" fill="#f3e6c8"/>
      <path d="M-15.5 0 L-13 -1.1 V1.1 Z" fill="#3a3a3a"/>
      <rect x="-8.5" y="-3" width="17.5" height="3" fill="#f7b441"/>
      <rect x="-8.5" y="0" width="17.5" height="3" fill="#e49a2f"/>
      <rect x="9" y="-3" width="2.6" height="6" fill="#e6e6e6"/>
      <path d="M11.6 -3 H14.5 Q15.8 -3 15.8 -1.5 V1.5 Q15.8 3 14.5 3 H11.6 Z" fill="#f06868"/>
    </g>
  </g>
  <rect x="123.5" y="45.2" width="5" height="1.8" fill="#7cc0f0"/>
  <rect x="215.2" y="45.2" width="5" height="1.8" fill="#7cc0f0"/>
  <rect x="261.5" y="45.2" width="5" height="1.8" fill="#7cc0f0"/>
  <!-- right icons -->
  <circle cx="1138" cy="22.9" r="10" fill="#dde6ef"/>
  <path d="M1132.5 27.5 Q1134 25.5 1134 21.5 Q1134 16.5 1138 16 Q1142 16.5 1142 21.5 Q1142 25.5 1143.5 27.5 Z" fill="#2c5a94"/>
  <circle cx="1138" cy="29" r="1.4" fill="#2c5a94"/>
  <circle cx="1162.7" cy="22.9" r="10" fill="#dde6ef"/>
  <path d="M1157 18 L1167.5 28.5" stroke="#2c5a94" stroke-width="2.4"/>
  <path d="M1167 17.5 L1157.5 27" stroke="#2c5a94" stroke-width="1.4"/>
  <circle cx="1157.5" cy="17.5" r="2.5" fill="none" stroke="#2c5a94" stroke-width="1.6"/>
  <circle cx="1187.4" cy="22.9" r="10" fill="#dde6ef"/>
  <circle cx="1187.4" cy="19" r="3.6" fill="#2c5a94"/>
  <ellipse cx="1187.4" cy="27.6" rx="6.2" ry="3.6" fill="#2c5a94"/>
</svg>
<div class="a" style="left:1200px;top:641.3px;width:57.6px;text-align:right;font-size:10px;line-height:12px;color:#eef2f6;-webkit-text-stroke:0.2px #eef2f6">16:26</div>
<div class="a" style="left:1190px;top:654.3px;width:67.6px;text-align:right;font-size:10px;line-height:12px;color:#eef2f6;-webkit-text-stroke:0.2px #eef2f6">30/04/2020</div>

<!-- callouts -->
<svg class="a" style="left:0;top:0" width="1265" height="712">
  <g fill="#ffff00" stroke="#2f528f" stroke-width="1">
    <rect x="373.3" y="43.3" width="163.5" height="38.3"/>
    <rect x="1003.6" y="36.8" width="136" height="38"/>
    <rect x="909.1" y="239.1" width="139.5" height="37.9"/>
    <path d="M118.6 531.6 H279 V569.5 H206.7 L84.7 619.4 L91 634.4 L74.2 617.5 L74.2 592.6 L80.2 607.4 L171.3 569.5 H118.6 Z"/>
    <path d="M251.3 584.8 H389.2 V623 H266.9 L197 653.6 L200 662.9 L186.7 650.6 L186.7 632.4 L191.1 640.8 L251.3 618.2 Z"/>
    <path d="M1071.7 536.7 H1256 V603 H1156 L1174 635.4 L1182.7 631 L1173.1 645 L1151.5 648.4 L1164.2 641.3 L1143 603 H1071.7 Z"/>
  </g>
</svg>
<div class="a" style="left:383px;top:49px;font-size:21.8px;line-height:26px;color:#000;white-space:nowrap;-webkit-text-stroke:0.25px #000">3270 emulator</div>
<div class="a" style="left:1012.9px;top:41px;font-size:21.9px;line-height:26px;color:#000;white-space:nowrap;transform:scaleX(0.894);transform-origin:0 0;-webkit-text-stroke:0.25px #000">JES Explorer</div>
<div class="a" style="left:919px;top:245px;font-size:21px;line-height:26px;color:#000;white-space:nowrap;-webkit-text-stroke:0.25px #000">File Explorer</div>
<div class="a" style="left:128.3px;top:537.3px;font-size:21.4px;line-height:26px;color:#000;white-space:nowrap;-webkit-text-stroke:0.25px #000">Available Apps</div>
<div class="a" style="left:260.6px;top:590.8px;font-size:21.3px;line-height:26px;color:#000;white-space:nowrap;-webkit-text-stroke:0.25px #000">Pinned apps</div>
<div class="a" style="left:1081.4px;top:541px;font-size:21.2px;line-height:28.5px;color:#000;white-space:nowrap;-webkit-text-stroke:0.25px #000">Logout and<br>User preferences</div>
</body></html>
